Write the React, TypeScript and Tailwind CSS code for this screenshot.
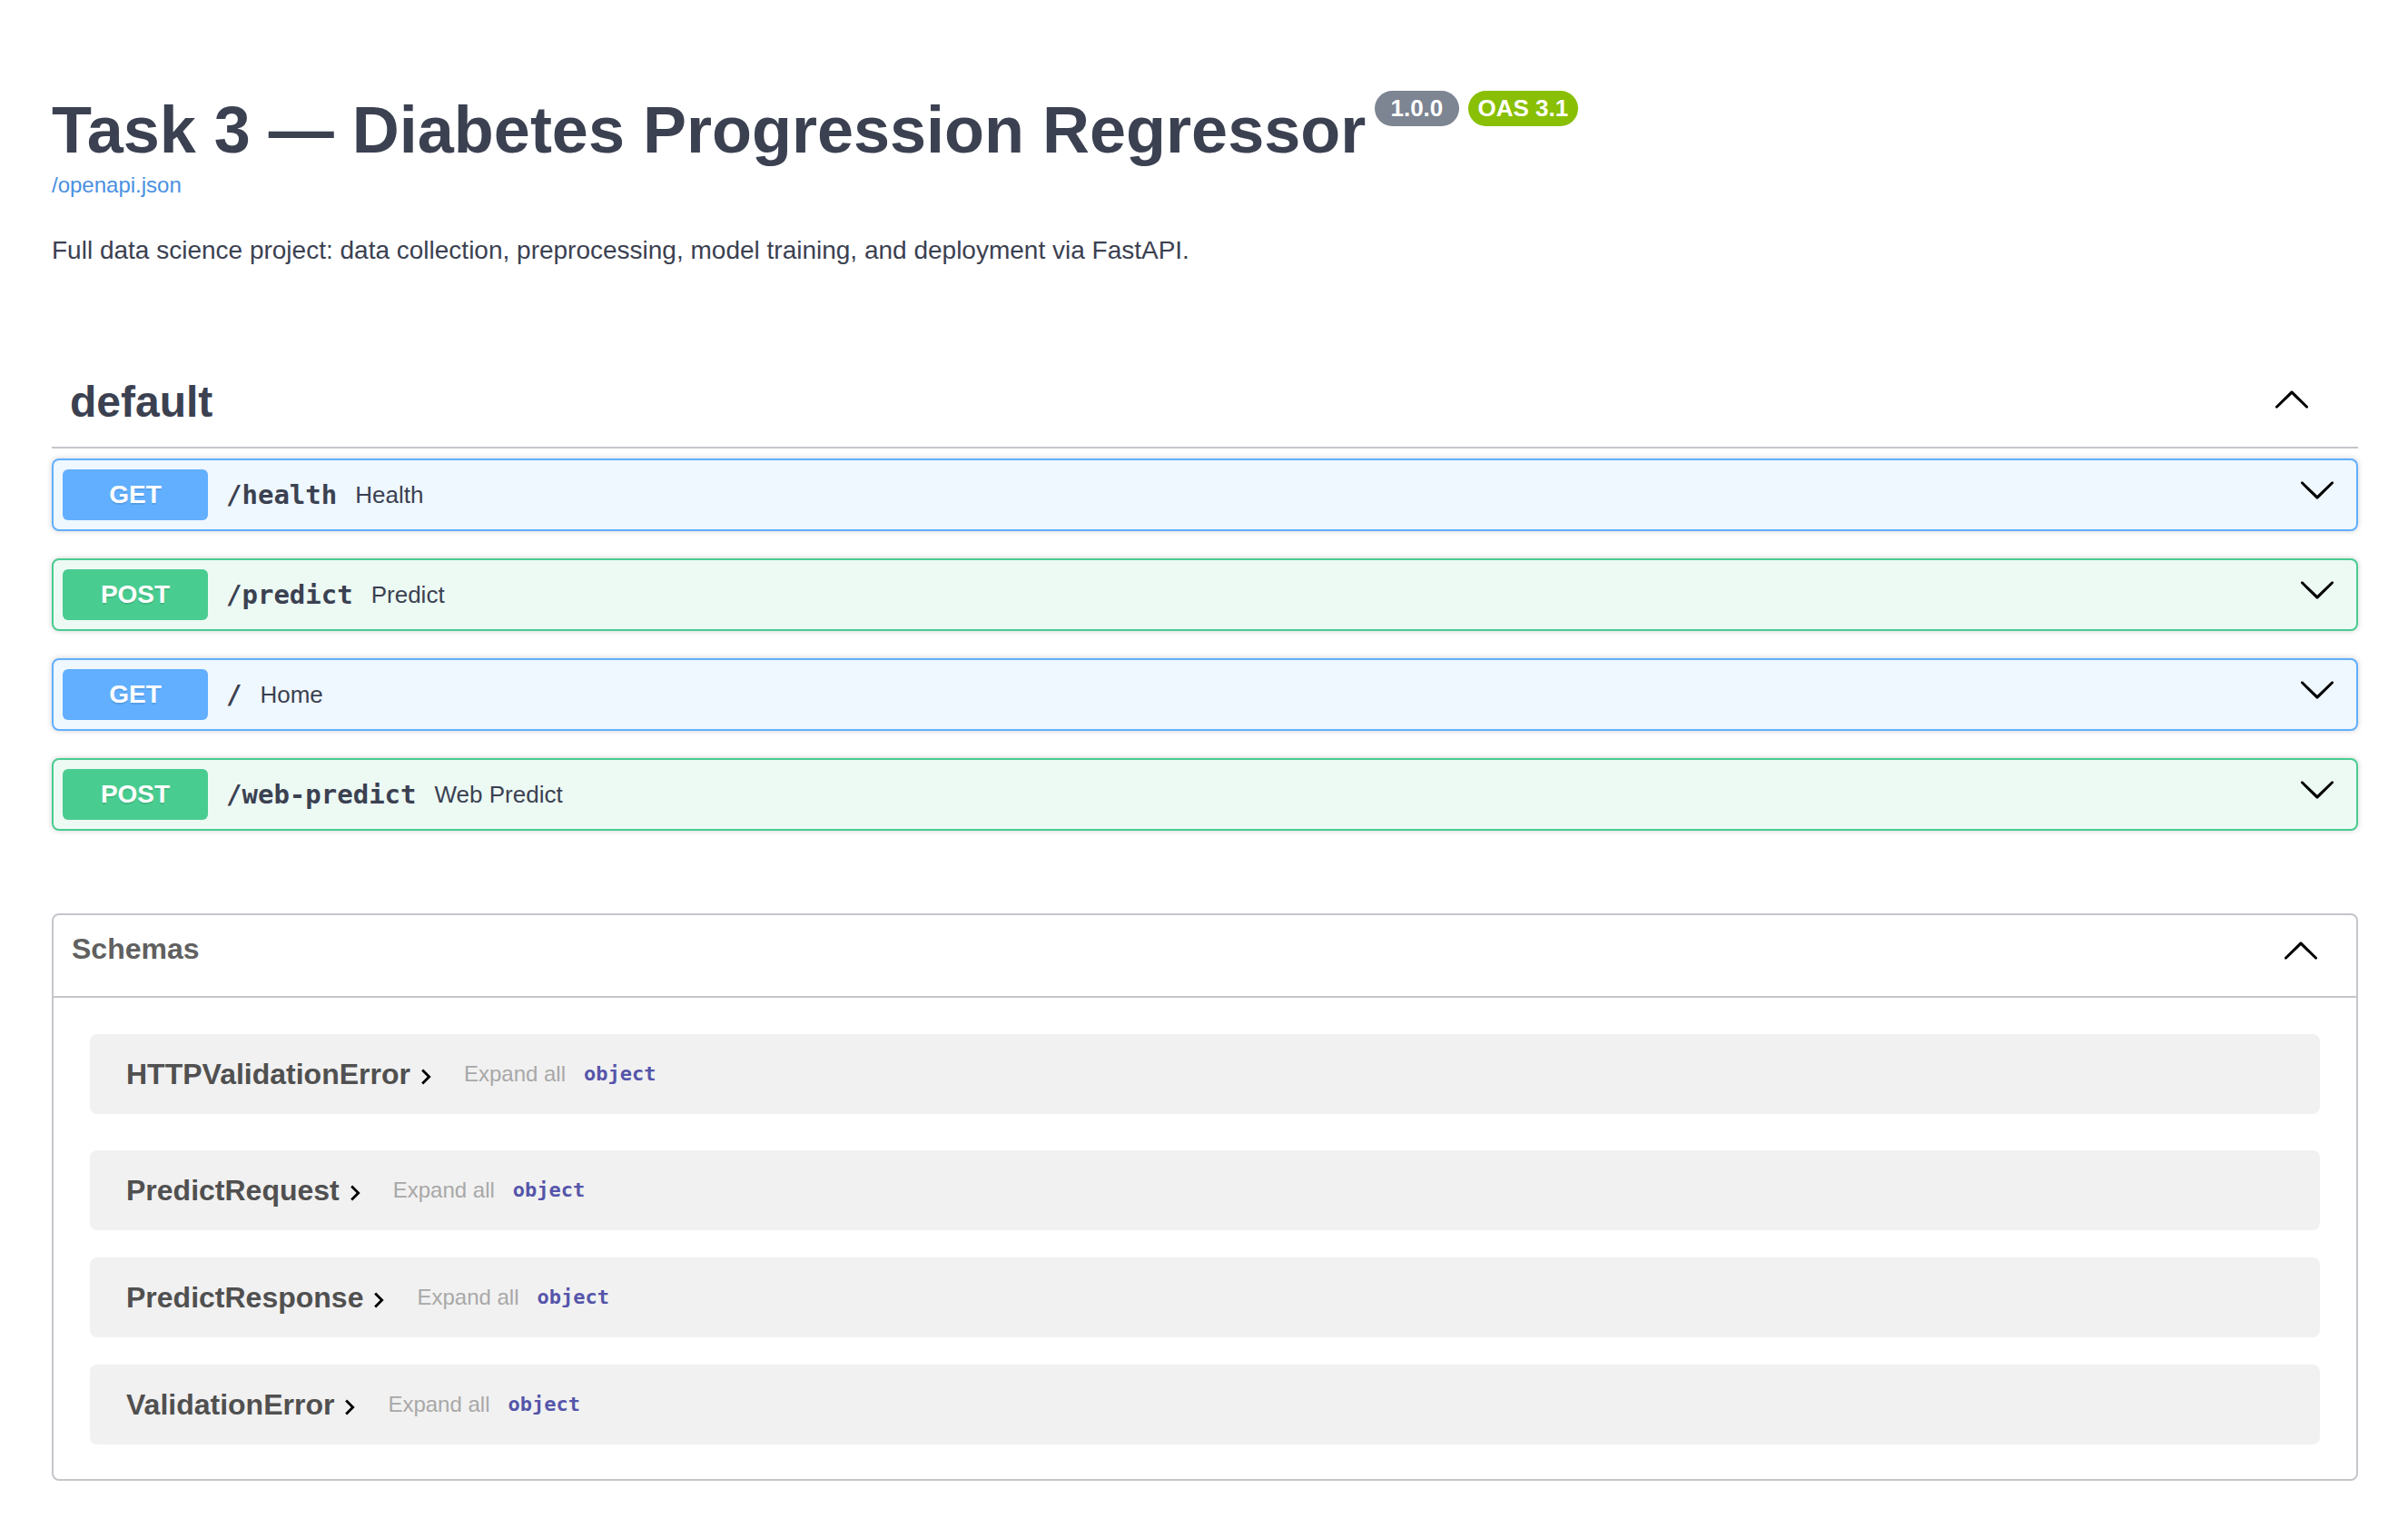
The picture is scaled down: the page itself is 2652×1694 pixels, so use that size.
import React from 'react';

const sans = { fontFamily: '"Liberation Sans", Arial, sans-serif' };

const operations = [
  { method: 'GET', path: '/health', summary: 'Health' },
  { method: 'POST', path: '/predict', summary: 'Predict' },
  { method: 'GET', path: '/', summary: 'Home' },
  { method: 'POST', path: '/web-predict', summary: 'Web Predict' },
];

const schemas = ['HTTPValidationError', 'PredictRequest', 'PredictResponse', 'ValidationError'];

const ArrowDown = ({ className }: { className?: string }) => (
  <svg className={className} width="42" height="42" viewBox="0 0 20 20" aria-hidden="true">
    <path d="M17.418 6.109c.272-.268.709-.268.979 0s.271.701 0 .969l-7.908 7.83c-.27.268-.707.268-.979 0l-7.908-7.83c-.27-.268-.27-.701 0-.969.271-.268.709-.268.979 0L10 13.25l7.418-7.141z" />
  </svg>
);

const ArrowUp = ({ className }: { className?: string }) => (
  <svg className={className} width="42" height="42" viewBox="0 0 20 20" aria-hidden="true">
    <path d="M17.418 14.908c.272.268.709.268.979 0s.271-.701 0-.969l-7.908-7.83c-.27-.268-.707-.268-.979 0l-7.908 7.83c-.27.268-.27.701 0 .969.271.268.709.268.979 0L10 7.767l7.418 7.141z" />
  </svg>
);

const OpBlock = ({ method, path, summary }: { method: string; path: string; summary: string }) => {
  const isGet = method === 'GET';
  return (
    <div
      className={`mb-[30px] flex items-center rounded-[8px] border-2 p-[10px] shadow-[0_0_6px_rgba(0,0,0,0.19)] ${
        isGet ? 'border-[#61affe] bg-[#eff7ff]' : 'border-[#49cc90] bg-[#edfaf4]'
      }`}
    >
      <span
        className={`flex h-[56px] w-[160px] shrink-0 items-center justify-center rounded-[6px] text-[28px] font-bold leading-[32px] text-white [text-shadow:0_2px_0_rgba(0,0,0,0.1)] ${
          isGet ? 'bg-[#61affe]' : 'bg-[#49cc90]'
        }`}
        style={sans}
      >
        {method}
      </span>
      <span
        className="px-[20px] text-[29px] font-bold leading-[36px] text-[#3b4151]"
        style={{ fontFamily: '"DejaVu Sans Mono", monospace' }}
      >
        {path}
      </span>
      <span className="text-[26px] leading-[30px] text-[#3b4151]" style={sans}>
        {summary}
      </span>
      <ArrowDown className="mb-[13px] ml-auto mr-[12px] shrink-0 fill-black" />
    </div>
  );
};

const SchemaRow = ({ name, index }: { name: string; index: number }) => (
  <div
    className={`mx-[40px] flex h-[88px] items-center rounded-[8px] bg-[#f1f1f1] pl-[40px] ${
      index === 0 ? 'mb-[40px]' : index === 3 ? 'mb-[38px]' : 'mb-[30px]'
    }`}
  >
    <span className="text-[32px] font-bold leading-[37px] text-[#505050]" style={sans}>
      {name}
    </span>
    <svg className="mt-[6px] shrink-0" width="34" height="34" viewBox="0 0 24 24" aria-hidden="true">
      <path d="M10 6 8.59 7.41 13.17 12l-4.58 4.59L10 18l6-6z" />
    </svg>
    <span className="ml-[25px] text-[24px] leading-[28px] text-[#a8a8a8]" style={sans}>
      Expand all
    </span>
    <span
      className="ml-[20px] text-[22px] font-bold leading-[28px] text-[#5555aa]"
      style={{ fontFamily: '"DejaVu Sans Mono", monospace' }}
    >
      object
    </span>
  </div>
);

export default function App() {
  return (
    <div className="min-h-screen bg-white pb-[60px] pl-[57px] pr-[55px] pt-[102px]" style={sans}>
      <div className="flex items-start">
        <h2 className="text-[72px] font-bold leading-[83px] text-[#3b4151]">
          Task 3 — Diabetes Progression Regressor
        </h2>
        <span className="-mt-[2px] ml-[10px] flex h-[39px] items-center whitespace-pre rounded-full bg-[#7d8492] px-[10px] text-[26px] font-bold text-white">
          {' 1.0.0 '}
        </span>
        <span className="-mt-[2px] ml-[10px] flex h-[39px] items-center rounded-full bg-[#89bf04] px-[11px] text-[26px] font-bold text-white">
          OAS 3.1
        </span>
      </div>
      <div className="mt-[5px] text-[24px] leading-[28px] text-[#4990e2]">/openapi.json</div>
      <p className="mt-[42px] text-[28px] leading-[32px] text-[#3b4151]">
        Full data science project: data collection, preprocessing, model training, and deployment via FastAPI.
      </p>

      <div className="mt-[103px] flex items-center border-b-2 border-[#c4c6cb] pb-[22px] pl-[20px] pr-[52px] pt-[20px]">
        <h3 className="text-[48px] font-bold leading-[55px] text-[#3b4151]">default</h3>
        <ArrowUp className="mb-[7px] ml-auto fill-black" />
      </div>

      <div className="mt-[11px]">
        {operations.map((op) => (
          <OpBlock key={op.method + op.path} {...op} />
        ))}
      </div>

      <section className="mt-[91px] rounded-[8px] border-2 border-[#c4c6cb]">
        <div className="flex h-[91px] items-start border-b-2 border-[#c4c6cb] pl-[20px] pr-[40px] pt-[19px]">
          <h4 className="text-[32px] font-bold leading-[37px] text-[#606060]">Schemas</h4>
          <ArrowUp className="-mt-[2px] ml-auto fill-black" />
        </div>
        <div className="pt-[40px]">
          {schemas.map((s, i) => (
            <SchemaRow key={s} name={s} index={i} />
          ))}
        </div>
      </section>
    </div>
  );
}
